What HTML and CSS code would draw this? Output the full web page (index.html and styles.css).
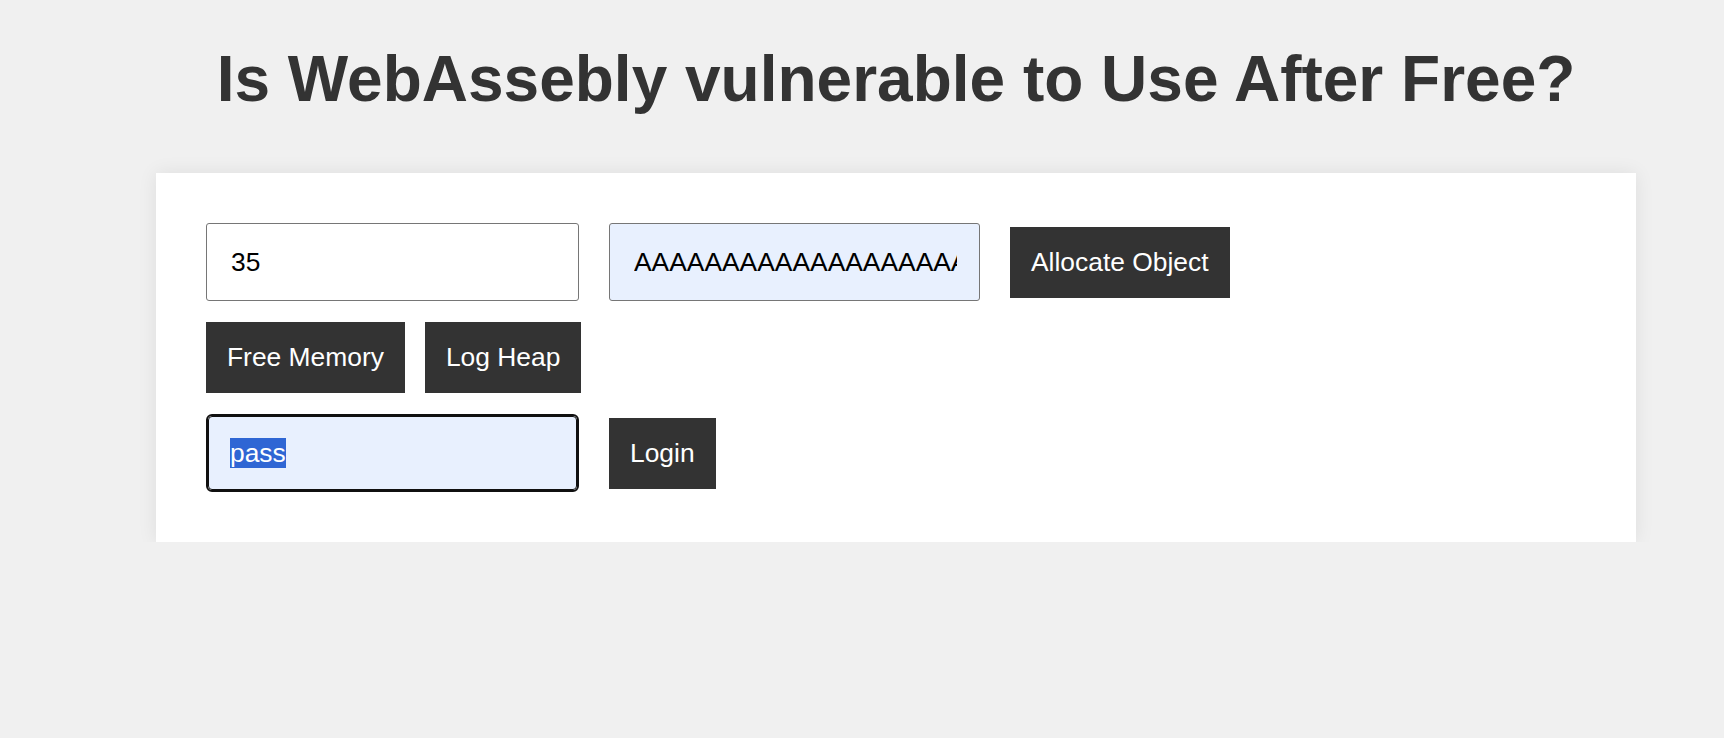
FILE: index.html
```html
<!DOCTYPE html>
<html lang="en">
<head>
<meta charset="utf-8">
<title>Use After Free</title>
<link rel="stylesheet" href="styles.css">
</head>
<body>
<div class="page">
  <h1 class="title">Is WebAssebly vulnerable to Use After Free?</h1>
  <div class="card">
    <div class="row row-first">
      <input class="field" type="text" value="35">
      <input class="field field-filled field-narrow" type="text" value="AAAAAAAAAAAAAAAAAAAAAAAAAAAA">
      <button class="btn">Allocate Object</button>
    </div>
    <div class="row">
      <button class="btn btn-gap">Free Memory</button>
      <button class="btn">Log Heap</button>
    </div>
    <div class="row">
      <div class="field field-filled field-focus"><span class="sel">pass</span></div>
      <button class="btn">Login</button>
    </div>
  </div>
</div>
</body>
</html>
```

FILE: styles.css
```css
html, body {
  margin: 0;
  padding: 0;
  background: #f0f0f0;
}

body {
  font-family: "Liberation Sans", Arial, sans-serif;
  color: #333333;
}

.page {
  margin-left: 156px;
  width: 1480px;
  padding-top: 43px;
}

.title {
  margin: 0 0 58px 0;
  font-size: 64px;
  font-weight: bold;
  line-height: 72px;
  text-align: center;
  color: #333333;
}

.card {
  background: #ffffff;
  padding: 50px;
  box-shadow: 0 0 18px rgba(0, 0, 0, 0.08);
}

.row {
  display: flex;
  align-items: center;
  margin-bottom: 21px;
}

.row:last-child {
  margin-bottom: 0;
}

.field {
  box-sizing: border-box;
  width: 373px;
  height: 78px;
  margin: 0 30px 0 0;
  padding: 0 22px 0 24px;
  border: 1px solid #767676;
  border-radius: 3px;
  background: #ffffff;
  font-family: "Liberation Sans", Arial, sans-serif;
  font-size: 26.4px;
  color: #000000;
  outline: none;
}

.field-narrow {
  width: 371px;
}

.field-filled {
  background: #e8f0fe;
}

.field-focus {
  display: flex;
  align-items: center;
  border: 1px solid #101010;
  outline: 2px solid #101010;
  outline-offset: 0;
  border-radius: 4px;
  width: 369px;
  height: 74px;
  margin: 2px 32px 2px 2px;
  padding-left: 21px;
}

.sel {
  background: #2f66d4;
  color: #ffffff;
  line-height: 30.5px;
}

.btn {
  box-sizing: border-box;
  height: 71px;
  padding: 0 21px;
  border: none;
  border-radius: 0;
  background: #333333;
  color: #ffffff;
  font-family: "Liberation Sans", Arial, sans-serif;
  font-size: 26.4px;
  cursor: pointer;
}

.btn-gap {
  margin-right: 20px;
}
```
